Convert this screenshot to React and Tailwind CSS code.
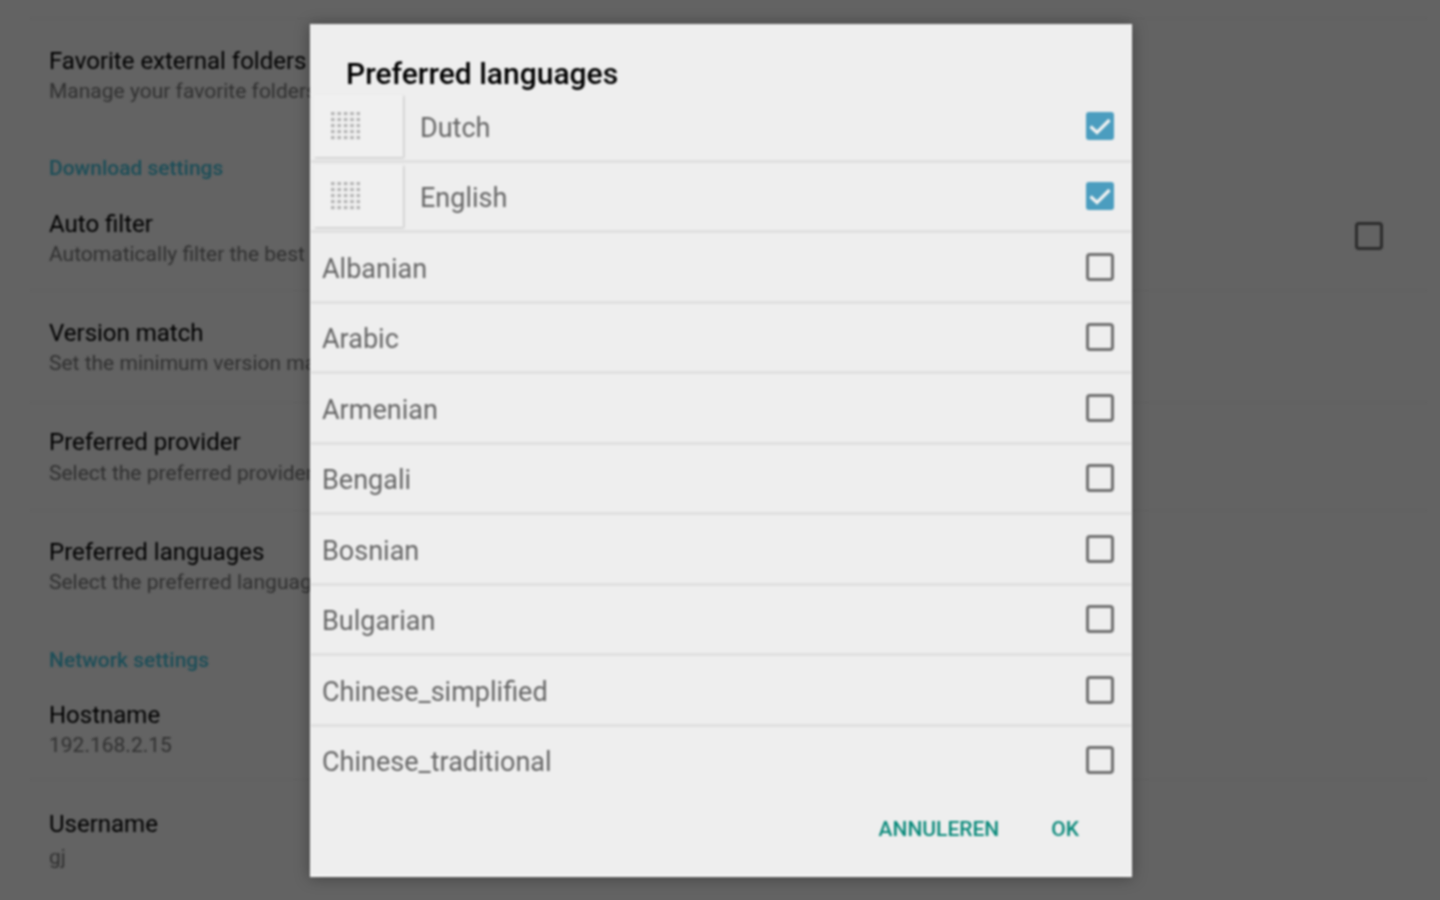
import React from "react";

const font = { fontFamily: "Roboto, 'Liberation Sans', sans-serif" };

function Setting({ title, sub, subCls = "" }) {
  return (
    <div>
      <div className="text-[24px] leading-[32px] text-[#000000] whitespace-nowrap">{title}</div>
      <div className={`text-[21px] leading-[28px] text-[#303030] whitespace-nowrap ${subCls}`}>{sub}</div>
    </div>
  );
}

function Section({ children, cls }) {
  return <div className={`pl-[19px] text-[21px] leading-[28px] font-medium text-[#1c4e58] whitespace-nowrap ${cls}`}>{children}</div>;
}

function Grip() {
  const dots = [];
  for (let r = 0; r < 5; r++) for (let c = 0; c < 5; c++) dots.push(<rect key={`${r}-${c}`} x={c * 6.4} y={r * 6} width="3.6" height="3.2" fill="#b4b4b4" />);
  return <svg width="29" height="28" viewBox="0 0 29 28">{dots}</svg>;
}

function Check({ on }) {
  if (on)
    return (
      <svg width="28" height="28" viewBox="0 0 28 28" className="shrink-0">
        <rect width="28" height="28" rx="3" fill="#4b9dbf" />
        <path d="M4.5 14.5 L11 20.5 L23.5 8" fill="none" stroke="#f2f2f2" strokeWidth="3.2" />
      </svg>
    );
  return <div className="w-7 h-7 shrink-0 rounded-[4px] border-[3px] border-[#707070]" />;
}

function Row({ name, handle, last }) {
  return (
    <div className={`h-[70.5px] shrink-0 flex items-center pr-[17px] border-b-[3px] ${last ? "border-transparent" : "border-[#e0e0e0]"}`}>
      {handle ? (
        <>
          <div className="w-[89px] h-[62px] ml-[3px] flex items-center pl-[17px] shadow-[1px_1px_2px_rgba(0,0,0,0.2)] bg-[#f0f0f0]">
            <Grip />
          </div>
          <div className="ml-[17px] pt-[4px] flex-1 text-[27px] text-[#666666]">{name}</div>
        </>
      ) : (
        <div className="ml-[11px] pt-[4px] flex-1 text-[27px] text-[#666666]">{name}</div>
      )}
      <Check on={handle} />
    </div>
  );
}

const langs = ["Albanian", "Arabic", "Armenian", "Bengali", "Bosnian", "Bulgarian", "Chinese_simplified", "Chinese_traditional"];

export default function App() {
  return (
    <div className="w-[1440px] h-[900px] overflow-hidden bg-[#636363]" style={font}>
      <div className="relative w-[1440px] h-[900px] blur-[0.8px]">
        <div className="flex flex-col pl-[30px] pr-[13px] pt-[18px]">
          <div className="border-t border-[#5f5f5f] pt-[26px] pl-[19px]">
            <Setting title="Favorite external folders" sub="Manage your favorite folders" />
          </div>
          <Section cls="mt-[49px]">Download settings</Section>
          <div className="flex items-center justify-between mt-[26px] pl-[19px] pr-[44px] pb-[22px] border-b border-[#5f5f5f]">
            <Setting title="Auto filter" sub="Automatically filter the best" />
            <div className="w-7 h-7 mb-[4px] rounded-[4px] border-[3px] border-[#2c2c2c]" />
          </div>
          <div className="pl-[19px] pt-[26px] pb-[25px] border-b border-[#5f5f5f]">
            <Setting title="Version match" sub="Set the minimum version match" />
          </div>
          <div className="pl-[19px] pt-[23px] pb-[23px] border-b border-[#5f5f5f]">
            <Setting title="Preferred provider" sub="Select the preferred provider" subCls="mt-[1px]" />
          </div>
          <div className="pl-[19px] pt-[25px]">
            <Setting title="Preferred languages" sub="Select the preferred languages" />
          </div>
          <Section cls="mt-[50px]">Network settings</Section>
          <div className="mt-[25px] pl-[19px] pb-[20px] border-b border-[#5f5f5f]">
            <Setting title="Hostname" sub="192.168.2.15" />
          </div>
          <div className="pl-[19px] pt-[28px]">
            <Setting title="Username" sub="gj" subCls="mt-[3px]" />
          </div>
        </div>

        <div className="absolute left-[310px] top-[24px] w-[822px] h-[853px] bg-[#eeeeee] flex flex-col border-b-2 border-x border-[#fafafa] shadow-[0_1px_14px_rgba(0,0,0,0.35)]">
          <div className="h-[68px] shrink-0 pl-[35px] pt-[30px] text-[30px] leading-[40px] font-medium text-[#000000]">Preferred languages</div>
          <Row name="Dutch" handle />
          <Row name="English" handle />
          {langs.map((l, i) => (
            <Row key={l} name={l} last={i === langs.length - 1} />
          ))}
          <div className="flex justify-end items-center gap-[52px] pr-[52px] pt-[18px] text-[21px] leading-[28px] font-medium text-[#0b8a7b]">
            <span>ANNULEREN</span>
            <span>OK</span>
          </div>
        </div>
      </div>
    </div>
  );
}
